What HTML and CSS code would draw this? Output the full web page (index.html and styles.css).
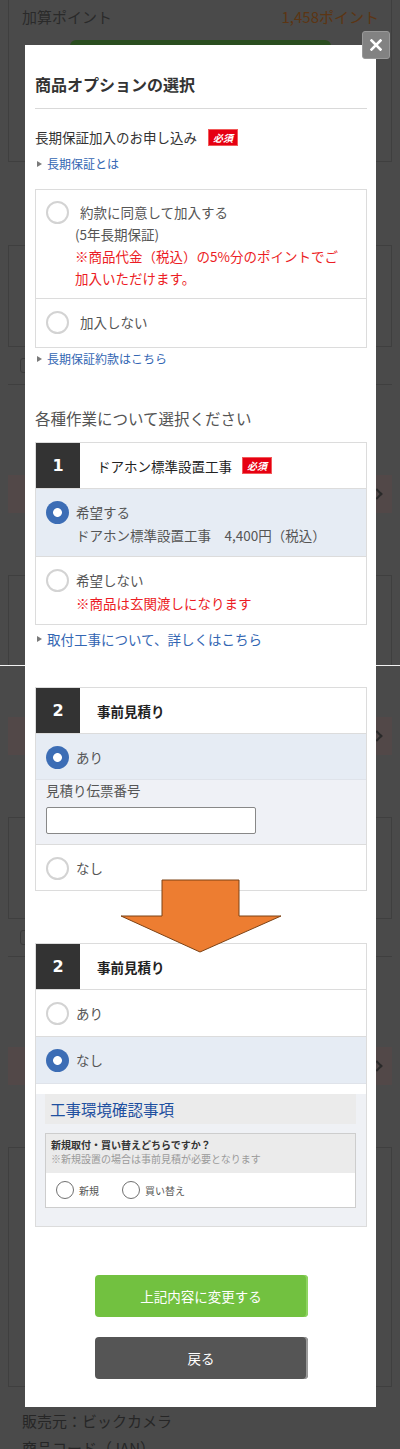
FILE: index.html
```html
<!DOCTYPE html>
<html lang="ja">
<head>
<meta charset="utf-8">
<title>商品オプションの選択</title>
<link rel="stylesheet" href="styles.css">
</head>
<body>
<div class="page">
  <div class="seg seg1">
    <div class="bg-topcard">
      <div class="pt-row"><span>加算ポイント</span><span class="pt-val">1,458ポイント</span></div>
      <div class="bg-green"></div>
    </div>
    <div class="bg-block first">
      <div class="bg-card"></div>
      <div class="bg-check"><span class="bg-box"></span></div>
      <div class="bg-lines"></div>
      <div class="bg-brown"><span class="chev"></span></div>
    </div>
    <div class="bg-block">
      <div class="bg-card"></div>
    </div>
  </div>
  <div class="seg seg2">
    <div class="bg-block shift">
      <div class="bg-card"></div>
      <div class="bg-check"><span class="bg-box"></span></div>
      <div class="bg-lines"></div>
      <div class="bg-brown"><span class="chev"></span></div>
    </div>
    <div class="bg-block">
      <div class="bg-card"></div>
      <div class="bg-check"><span class="bg-box"></span></div>
      <div class="bg-lines"></div>
      <div class="bg-brown"><span class="chev"></span></div>
    </div>
    <div class="bg-card last"></div>
    <div class="seller">販売元：ビックカメラ</div>
    <div class="seller">商品コード（JAN）</div>
  </div>
</div>

<div class="stitch"></div>

<div class="modal">
  <button class="close" type="button" aria-label="閉じる">
    <svg width="12" height="12" viewBox="0 0 12 12"><path d="M1.5 1.5 L10.5 10.5 M10.5 1.5 L1.5 10.5" stroke="#fff" stroke-width="2.6" stroke-linecap="square"/></svg>
  </button>

  <h2 class="m-title">商品オプションの選択</h2>

  <div class="q-head">長期保証加入のお申し込み<span class="req">必須</span></div>
  <a class="tri-link">長期保証とは</a>

  <div class="opt-box">
    <div class="opt first">
      <span class="radio"></span>
      <div class="opt-text">
        <div class="ind">約款に同意して加入する</div>
        <div>(5年長期保証)</div>
        <div class="red">※商品代金（税込）の5%分のポイントでご<br>加入いただけます。</div>
      </div>
    </div>
    <div class="opt second">
      <span class="radio"></span>
      <div class="opt-text"><div class="ind">加入しない</div></div>
    </div>
  </div>
  <a class="tri-link tight">長期保証約款はこちら</a>

  <div class="sec-title">各種作業について選択ください</div>

  <div class="work">
    <div class="w-head"><span class="num">1</span><span class="w-title">ドアホン標準設置工事</span><span class="req">必須</span></div>
    <div class="w-opt sel">
      <span class="radio on"></span>
      <div class="opt-text"><div>希望する</div><div>ドアホン標準設置工事　4,400円（税込）</div></div>
    </div>
    <div class="w-opt">
      <span class="radio"></span>
      <div class="opt-text"><div>希望しない</div><div class="red">※商品は玄関渡しになります</div></div>
    </div>
  </div>
  <a class="tri-link big">取付工事について、詳しくはこちら</a>

  <div class="work w2">
    <div class="w-head"><span class="num">2</span><span class="w-title b">事前見積り</span></div>
    <div class="w-opt single sel">
      <span class="radio on"></span>
      <div class="opt-text"><div>あり</div></div>
    </div>
    <div class="w-sub">
      <div class="sub-label">見積り伝票番号</div>
      <input class="sub-input" type="text">
    </div>
    <div class="w-opt single">
      <span class="radio"></span>
      <div class="opt-text"><div>なし</div></div>
    </div>
  </div>

  <svg class="arrow" width="162" height="75" viewBox="0 0 162 75">
    <polygon points="42,1 119,1 119,37 161,37 80,73 1,37 42,37" fill="#ed7d31" stroke="#7d4214" stroke-width="1"/>
  </svg>

  <div class="work w3">
    <div class="w-head"><span class="num">2</span><span class="w-title b">事前見積り</span></div>
    <div class="w-opt single">
      <span class="radio"></span>
      <div class="opt-text"><div>あり</div></div>
    </div>
    <div class="w-opt single sel">
      <span class="radio on"></span>
      <div class="opt-text"><div>なし</div></div>
    </div>
    <div class="env-wrap">
      <div class="env">
        <div class="env-head">工事環境確認事項</div>
        <div class="q-box">
          <div class="q-top">
            <div class="q-main">新規取付・買い替えどちらですか？</div>
            <div class="q-note">※新規設置の場合は事前見積が必要となります</div>
          </div>
          <div class="q-bottom">
            <span class="q-item"><span class="sm-radio"></span>新規</span>
            <span class="q-item"><span class="sm-radio"></span>買い替え</span>
          </div>
        </div>
      </div>
    </div>
  </div>

  <div class="btns">
    <button class="btn green" type="button">上記内容に変更する</button>
    <button class="btn dark" type="button">戻る</button>
  </div>
</div>
</body>
</html>
```

FILE: styles.css
```css
* { box-sizing: border-box; }
html, body { margin: 0; padding: 0; }
body {
  width: 400px;
  height: 1449px;
  position: relative;
  overflow: hidden;
  background: #4a4a4a;
  font-family: "Noto Sans CJK JP", "Noto Sans", "DejaVu Sans", sans-serif;
  color: #333;
}

/* ---------- dimmed background page ---------- */
.page { color: #272727; }
.seg { overflow: hidden; }
.seg1 { height: 665px; }
.seg2 { height: 784px; }

.bg-topcard {
  margin: 0 8px;
  height: 162px;
  border: 1px solid #3f3f3f;
  border-top: none;
}
.pt-row {
  display: flex;
  justify-content: space-between;
  padding: 6px 12px 0 13px;
  font-size: 15px;
  line-height: 22px;
  color: #2a2a2a;
}
.pt-val { color: #5c3513; }
.bg-green {
  margin: 12px 0 0 61px;
  width: 261px;
  height: 40px;
  border-radius: 6px;
  background: #2a4d1f;
}

.bg-block { padding-bottom: 62px; }
.bg-block.first { margin-top: 83px; }
.bg-block.shift { margin-top: -178px; }
.bg-card {
  margin: 0 8px;
  height: 102px;
  border: 1px solid #3f3f3f;
}
.bg-card.last { height: 240px; }
.bg-check {
  margin: 0 8px;
  height: 38px;
  border-bottom: 1px solid #3f3f3f;
  display: flex;
  align-items: center;
  padding-left: 12px;
}
.bg-box {
  width: 15px;
  height: 15px;
  border: 1px solid #3a3a3a;
  border-radius: 3px;
}
.bg-lines { height: 86px; }
.bg-brown {
  margin: 4px 8px 0;
  height: 38px;
  background: #524848;
  display: flex;
  align-items: center;
  justify-content: flex-end;
  padding-right: 11px;
}
.chev {
  width: 8px;
  height: 8px;
  border-top: 2px solid #2a2a2a;
  border-right: 2px solid #2a2a2a;
  transform: rotate(45deg);
}
.seller {
  padding-left: 22px;
  font-size: 15px;
  line-height: 22px;
  color: #262626;
}
.bg-card.last + .seller { margin-top: 23px; }
.seller + .seller { margin-top: 5px; }

.stitch {
  position: absolute;
  top: 665px;
  left: 0;
  width: 400px;
  height: 1px;
  background: #f2f2f2;
}

/* ---------- modal ---------- */
.modal {
  position: absolute;
  top: 45px;
  left: 25px;
  width: 351px;
  background: #fff;
  padding: 0 9px 28px 10px;
  color: #333;
}
.close {
  position: absolute;
  top: -14px;
  right: -14px;
  width: 28px;
  height: 28px;
  padding: 0;
  border: 1px solid #999;
  border-radius: 3px;
  background: #828282;
  display: flex;
  align-items: center;
  justify-content: center;
}
.m-title {
  margin: 0;
  padding: 27px 0 12px;
  font-size: 16px;
  line-height: 24px;
  font-weight: 700;
  color: #333;
  border-bottom: 1px solid #d9d9d9;
}
.q-head {
  margin-top: 18px;
  display: flex;
  align-items: center;
  gap: 11px;
  font-size: 13.5px;
  line-height: 20px;
  color: #333;
}
.req {
  display: inline-block;
  height: 17px;
  padding: 0 4px;
  background: #e60012;
  border: 1px solid #f25a5a;
  color: #fff;
  font-size: 10px;
  font-weight: 700;
  font-style: italic;
  line-height: 15px;
}
.tri-link {
  display: flex;
  align-items: center;
  margin-top: 8px;
  font-size: 12px;
  line-height: 18px;
  color: #3366b3;
}
.tri-link::before {
  content: "";
  width: 0;
  height: 0;
  margin: 0 5px 0 2px;
  border-left: 5px solid #7a7a7a;
  border-top: 3px solid transparent;
  border-bottom: 3px solid transparent;
}
.tri-link.tight { margin-top: 2px; }
.tri-link.big { margin-top: 5px; font-size: 13.5px; }

.opt-box { margin-top: 16px; border: 1px solid #dcdcdc; }
.opt {
  display: flex;
  align-items: flex-start;
  gap: 6px;
  padding: 11px 10px 9px;
  font-size: 13.5px;
  line-height: 22px;
  color: #555;
}
.opt.second { padding: 12px 10px 13px; border-top: 1px solid #dcdcdc; }
.ind { padding-left: 5px; }
.red { color: #ec1c24; }

.radio {
  flex: none;
  width: 23px;
  height: 23px;
  border-radius: 50%;
  border: 2px solid #d3d3d3;
  background: #fff;
}
.radio.on {
  border: none;
  background: radial-gradient(circle at center, #fff 0 4px, #3c6db5 4.8px);
}

.sec-title {
  margin-top: 39px;
  font-size: 15.5px;
  line-height: 22px;
  color: #555;
}

.work { margin-top: 13px; border: 1px solid #dcdcdc; background: #fff; }
.work.w2 { margin-top: 39px; }
.work.w3 { margin-top: 52px; }
.w-head {
  display: flex;
  align-items: center;
  height: 46px;
  border-bottom: 1px solid #dcdcdc;
}
.num {
  align-self: stretch;
  width: 44px;
  background: #333;
  color: #fff;
  font-family: "DejaVu Sans", sans-serif;
  font-weight: 700;
  font-size: 16px;
  display: flex;
  align-items: center;
  justify-content: center;
}
.w-title {
  margin: 0 10px 0 17px;
  font-size: 13.5px;
  color: #222;
}
.w-title.b { font-weight: 700; }

.w-opt {
  display: flex;
  align-items: flex-start;
  gap: 7px;
  padding: 12px 10px 9px;
  font-size: 13.5px;
  line-height: 23px;
  color: #555;
}
.w-opt + .w-opt { border-top: 1px solid #dcdcdc; }
.w-opt.single { padding: 12px 10px 10px; line-height: 22px; }
.w3 .w-opt.single { padding-bottom: 11px; }
.w-opt.sel { background: #e6ecf4; }

.w-sub {
  background: #eff1f6;
  border-top: 1px solid #dfe3ea;
  padding: 0 10px 10px;
}
.sub-label { font-size: 13.5px; line-height: 20px; color: #555; }
.sub-input {
  display: block;
  margin-top: 7px;
  width: 210px;
  height: 27px;
  border: 1px solid #888;
  border-radius: 2px;
  background: #fff;
}
.w-sub + .w-opt { border-top: 1px solid #dcdcdc; }

.arrow {
  position: absolute;
  top: 834px;
  left: 95px;
}

.env-wrap { border-top: 1px solid #dfe3ea; padding-top: 10px; background: #fff; }
.env { background: #eff1f5; padding: 0 10px 18px 9px; }
.env-head {
  height: 30px;
  background: #ebebeb;
  padding-left: 5px;
  font-size: 15.5px;
  line-height: 30px;
  color: #1f50a0;
}
.q-box { margin-top: 9px; border: 1px solid #cdcdcd; }
.q-top { background: #ebebeb; padding: 4px 5px 7px; }
.q-main { font-size: 10px; line-height: 14px; font-weight: 700; color: #333; }
.q-note { font-size: 10px; line-height: 14px; color: #9a9a9a; }
.q-bottom {
  background: #fff;
  padding: 8px 10px;
  display: flex;
  gap: 23px;
}
.q-item {
  display: flex;
  align-items: center;
  gap: 5px;
  font-size: 10px;
  color: #555;
}
.sm-radio {
  width: 18px;
  height: 18px;
  border-radius: 50%;
  border: 1.5px solid #707070;
  background: #fff;
}

.btns {
  margin-top: 48px;
  display: flex;
  flex-direction: column;
  align-items: center;
  gap: 20px;
}
.btn {
  width: 213px;
  height: 42px;
  border: none;
  border-radius: 4px;
  color: #fff;
  font-family: "Noto Sans CJK JP", "Noto Sans", sans-serif;
  font-size: 13.5px;
}
.btn.green { background: #72c140; box-shadow: inset -2px 0 0 #8fd462; }
.btn.dark { background: #555; box-shadow: inset -2px 0 0 #9a9a9a; }
```
